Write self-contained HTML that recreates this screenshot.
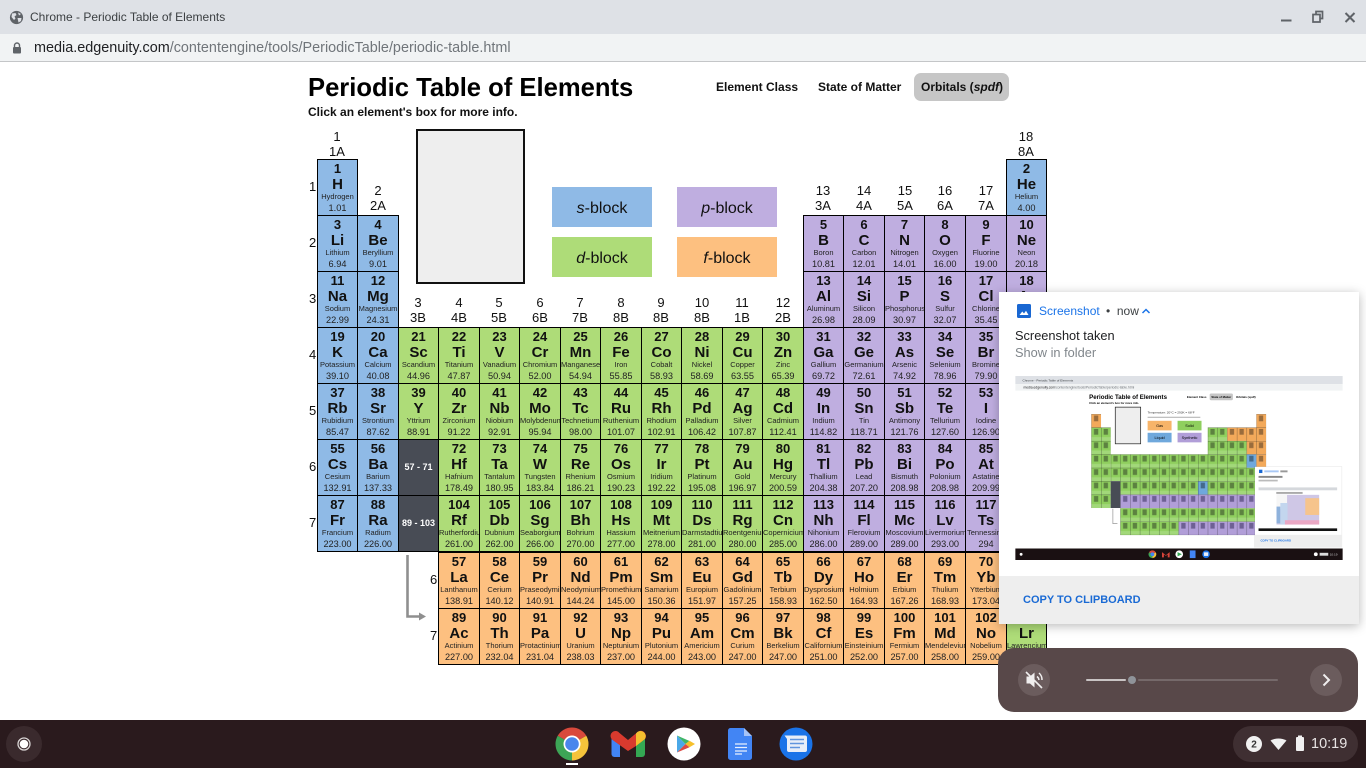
<!DOCTYPE html>
<html><head><meta charset="utf-8"><title>Periodic Table of Elements</title>
<style>
html,body{margin:0;padding:0;width:1366px;height:768px;overflow:hidden;background:#fff;font-family:"Liberation Sans",sans-serif;color:#000}
.a{position:absolute}
.c{position:absolute;box-sizing:border-box;height:57px;border:1px solid #000;padding-top:2px;text-align:center;overflow:hidden;white-space:nowrap;color:#111}
.c b,.c i,.c u,.c s{display:block;text-decoration:none;font-style:normal}
.c b{font-size:13px;line-height:14px;font-weight:700}
.c i{font-size:15px;line-height:16px;font-weight:700;margin-top:1px}
.c u{font-size:7.5px;line-height:9px;color:#222;margin-top:-1px}
.c s{font-size:9.2px;line-height:12px;margin-top:1px;color:#222}
.S{background:#8fbae6}.P{background:#bfaee0}.D{background:#aedc78}.F{background:#fdc080}
.k{background:#484c55;color:#fff;font-weight:700;font-size:9px;line-height:55px;padding:0}
.x1{left:317px;width:41px}.x2{left:357px;width:42px}.x3{left:398px;width:41px}.x4{left:438px;width:42px}.x5{left:479px;width:41px}.x6{left:519px;width:42px}.x7{left:560px;width:41px}.x8{left:600px;width:42px}.x9{left:641px;width:41px}.x10{left:681px;width:42px}.x11{left:722px;width:41px}.x12{left:762px;width:42px}.x13{left:803px;width:41px}.x14{left:843px;width:42px}.x15{left:884px;width:41px}.x16{left:924px;width:42px}.x17{left:965px;width:42px}.x18{left:1006px;width:41px}
.y1{top:159px}.y2{top:215px}.y3{top:271px}.y4{top:327px}.y5{top:383px}.y6{top:439px}.y7{top:495px}.y8{top:552px}.y9{top:608px}
.g{position:absolute;width:40px;text-align:center;font-size:13px;line-height:15px;color:#111}
.n{position:absolute;font-size:13px;line-height:15px;color:#111}
.l{position:absolute;width:100px;height:40px;line-height:43px;text-align:center;font-size:16px;color:#111}
.l em{font-style:italic}
.m{position:absolute;top:80px;font-size:12px;font-weight:700;line-height:15px;color:#111;white-space:nowrap}
</style></head><body>

<div class="a" style="left:0;top:0;width:1366px;height:34px;background:#dee1e6"></div>
<div class="a" style="left:0;top:34px;width:1366px;height:27px;background:#f1f3f4"></div>
<div class="a" style="left:0;top:61px;width:1366px;height:1px;background:#c4c6c8"></div>
<svg class="a" style="left:9px;top:10px" width="15" height="15" viewBox="0 0 15 15"><circle cx="7.5" cy="7.5" r="6.6" fill="#5f6368"/><path d="M3 3.5 L6.5 3 L7.5 5 L5.5 6.5 L6.5 8.5 L5 10 L2.500 7 Z M9 2.5 L12 4 L10 5.500 Z M8.500 8 L12.500 8 L12 11 L9.500 12.500 Z" fill="#dee1e6"/></svg>
<div class="a" style="left:30px;top:10px;font-size:12px;line-height:15px;color:#3c4043;white-space:nowrap">Chrome - Periodic Table of Elements</div>
<svg class="a" style="left:11px;top:41px" width="12" height="14" viewBox="0 0 12 14"><path d="M3.5 6V4.5a2.5 2.5 0 0 1 5 0V6" fill="none" stroke="#5f6368" stroke-width="1.4"/><rect x="2" y="6" width="8" height="6.5" rx="1" fill="#5f6368"/></svg>
<div class="a" style="left:34px;top:40px;font-size:14.4px;line-height:17px;color:#70757a;white-space:nowrap"><span style="color:#202124">media.edgenuity.com</span>/contentengine/tools/PeriodicTable/periodic-table.html</div>
<svg class="a" style="left:1276px;top:8px" width="86" height="20" viewBox="0 0 86 20" fill="none" stroke="#5f6368" stroke-width="2"><path d="M5 12.5H15.500"/><path d="M37 6.500V14H44V6.500ZM40 6V3.500H46.500V10.500H44.500" stroke-width="1.7"/><path d="M69.500 5L78.500 14M78.500 5L69.500 14"/></svg>

<div class="a" style="left:308px;top:72px;font-size:25.6px;line-height:33px;font-weight:700;white-space:nowrap">Periodic Table of Elements</div>
<div class="a" style="left:308px;top:105px;font-size:12px;line-height:14px;font-weight:700;white-space:nowrap;color:#111">Click an element's box for more info.</div>
<div class="m" style="left:716px">Element Class</div>
<div class="m" style="left:818px">State of Matter</div>
<div class="a" style="left:914px;top:73px;width:95px;height:28px;border-radius:7px;background:#c6c6c6"></div>
<div class="m" style="left:921px">Orbitals (<em>spdf</em>)</div>

<div class="a" style="left:416px;top:129px;width:105px;height:151px;border:2px solid #111;background:#eee"></div>
<div class="l S" style="left:552px;top:187px"><em>s</em>-block</div>
<div class="l P" style="left:677px;top:187px"><em>p</em>-block</div>
<div class="l D" style="left:552px;top:237px"><em>d</em>-block</div>
<div class="l F" style="left:677px;top:237px"><em>f</em>-block</div>

<div class="g" style="left:317px;top:129px">1<br>1A</div>
<div class="g" style="left:358px;top:183px">2<br>2A</div>
<div class="g" style="left:398px;top:295px">3<br>3B</div>
<div class="g" style="left:439px;top:295px">4<br>4B</div>
<div class="g" style="left:479px;top:295px">5<br>5B</div>
<div class="g" style="left:520px;top:295px">6<br>6B</div>
<div class="g" style="left:560px;top:295px">7<br>7B</div>
<div class="g" style="left:601px;top:295px">8<br>8B</div>
<div class="g" style="left:641px;top:295px">9<br>8B</div>
<div class="g" style="left:682px;top:295px">10<br>8B</div>
<div class="g" style="left:722px;top:295px">11<br>1B</div>
<div class="g" style="left:763px;top:295px">12<br>2B</div>
<div class="g" style="left:803px;top:183px">13<br>3A</div>
<div class="g" style="left:844px;top:183px">14<br>4A</div>
<div class="g" style="left:885px;top:183px">15<br>5A</div>
<div class="g" style="left:925px;top:183px">16<br>6A</div>
<div class="g" style="left:966px;top:183px">17<br>7A</div>
<div class="g" style="left:1006px;top:129px">18<br>8A</div>
<div class="n" style="left:309px;top:179px">1</div>
<div class="n" style="left:309px;top:235px">2</div>
<div class="n" style="left:309px;top:291px">3</div>
<div class="n" style="left:309px;top:347px">4</div>
<div class="n" style="left:309px;top:403px">5</div>
<div class="n" style="left:309px;top:459px">6</div>
<div class="n" style="left:309px;top:515px">7</div>
<div class="n" style="left:430px;top:572px">6</div>
<div class="n" style="left:430px;top:628px">7</div>

<div class="c S x1 y1"><b>1</b><i>H</i><u>Hydrogen</u><s>1.01</s></div>
<div class="c S x18 y1"><b>2</b><i>He</i><u>Helium</u><s>4.00</s></div>
<div class="c S x1 y2"><b>3</b><i>Li</i><u>Lithium</u><s>6.94</s></div>
<div class="c S x2 y2"><b>4</b><i>Be</i><u>Beryllium</u><s>9.01</s></div>
<div class="c P x13 y2"><b>5</b><i>B</i><u>Boron</u><s>10.81</s></div>
<div class="c P x14 y2"><b>6</b><i>C</i><u>Carbon</u><s>12.01</s></div>
<div class="c P x15 y2"><b>7</b><i>N</i><u>Nitrogen</u><s>14.01</s></div>
<div class="c P x16 y2"><b>8</b><i>O</i><u>Oxygen</u><s>16.00</s></div>
<div class="c P x17 y2"><b>9</b><i>F</i><u>Fluorine</u><s>19.00</s></div>
<div class="c P x18 y2"><b>10</b><i>Ne</i><u>Neon</u><s>20.18</s></div>
<div class="c S x1 y3"><b>11</b><i>Na</i><u>Sodium</u><s>22.99</s></div>
<div class="c S x2 y3"><b>12</b><i>Mg</i><u>Magnesium</u><s>24.31</s></div>
<div class="c P x13 y3"><b>13</b><i>Al</i><u>Aluminum</u><s>26.98</s></div>
<div class="c P x14 y3"><b>14</b><i>Si</i><u>Silicon</u><s>28.09</s></div>
<div class="c P x15 y3"><b>15</b><i>P</i><u>Phosphorus</u><s>30.97</s></div>
<div class="c P x16 y3"><b>16</b><i>S</i><u>Sulfur</u><s>32.07</s></div>
<div class="c P x17 y3"><b>17</b><i>Cl</i><u>Chlorine</u><s>35.45</s></div>
<div class="c P x18 y3"><b>18</b><i>Ar</i><u>Argon</u><s>39.95</s></div>
<div class="c S x1 y4"><b>19</b><i>K</i><u>Potassium</u><s>39.10</s></div>
<div class="c S x2 y4"><b>20</b><i>Ca</i><u>Calcium</u><s>40.08</s></div>
<div class="c D x3 y4"><b>21</b><i>Sc</i><u>Scandium</u><s>44.96</s></div>
<div class="c D x4 y4"><b>22</b><i>Ti</i><u>Titanium</u><s>47.87</s></div>
<div class="c D x5 y4"><b>23</b><i>V</i><u>Vanadium</u><s>50.94</s></div>
<div class="c D x6 y4"><b>24</b><i>Cr</i><u>Chromium</u><s>52.00</s></div>
<div class="c D x7 y4"><b>25</b><i>Mn</i><u>Manganese</u><s>54.94</s></div>
<div class="c D x8 y4"><b>26</b><i>Fe</i><u>Iron</u><s>55.85</s></div>
<div class="c D x9 y4"><b>27</b><i>Co</i><u>Cobalt</u><s>58.93</s></div>
<div class="c D x10 y4"><b>28</b><i>Ni</i><u>Nickel</u><s>58.69</s></div>
<div class="c D x11 y4"><b>29</b><i>Cu</i><u>Copper</u><s>63.55</s></div>
<div class="c D x12 y4"><b>30</b><i>Zn</i><u>Zinc</u><s>65.39</s></div>
<div class="c P x13 y4"><b>31</b><i>Ga</i><u>Gallium</u><s>69.72</s></div>
<div class="c P x14 y4"><b>32</b><i>Ge</i><u>Germanium</u><s>72.61</s></div>
<div class="c P x15 y4"><b>33</b><i>As</i><u>Arsenic</u><s>74.92</s></div>
<div class="c P x16 y4"><b>34</b><i>Se</i><u>Selenium</u><s>78.96</s></div>
<div class="c P x17 y4"><b>35</b><i>Br</i><u>Bromine</u><s>79.90</s></div>
<div class="c P x18 y4"><b>36</b><i>Kr</i><u>Krypton</u><s>83.80</s></div>
<div class="c S x1 y5"><b>37</b><i>Rb</i><u>Rubidium</u><s>85.47</s></div>
<div class="c S x2 y5"><b>38</b><i>Sr</i><u>Strontium</u><s>87.62</s></div>
<div class="c D x3 y5"><b>39</b><i>Y</i><u>Yttrium</u><s>88.91</s></div>
<div class="c D x4 y5"><b>40</b><i>Zr</i><u>Zirconium</u><s>91.22</s></div>
<div class="c D x5 y5"><b>41</b><i>Nb</i><u>Niobium</u><s>92.91</s></div>
<div class="c D x6 y5"><b>42</b><i>Mo</i><u>Molybdenum</u><s>95.94</s></div>
<div class="c D x7 y5"><b>43</b><i>Tc</i><u>Technetium</u><s>98.00</s></div>
<div class="c D x8 y5"><b>44</b><i>Ru</i><u>Ruthenium</u><s>101.07</s></div>
<div class="c D x9 y5"><b>45</b><i>Rh</i><u>Rhodium</u><s>102.91</s></div>
<div class="c D x10 y5"><b>46</b><i>Pd</i><u>Palladium</u><s>106.42</s></div>
<div class="c D x11 y5"><b>47</b><i>Ag</i><u>Silver</u><s>107.87</s></div>
<div class="c D x12 y5"><b>48</b><i>Cd</i><u>Cadmium</u><s>112.41</s></div>
<div class="c P x13 y5"><b>49</b><i>In</i><u>Indium</u><s>114.82</s></div>
<div class="c P x14 y5"><b>50</b><i>Sn</i><u>Tin</u><s>118.71</s></div>
<div class="c P x15 y5"><b>51</b><i>Sb</i><u>Antimony</u><s>121.76</s></div>
<div class="c P x16 y5"><b>52</b><i>Te</i><u>Tellurium</u><s>127.60</s></div>
<div class="c P x17 y5"><b>53</b><i>I</i><u>Iodine</u><s>126.90</s></div>
<div class="c P x18 y5"><b>54</b><i>Xe</i><u>Xenon</u><s>131.29</s></div>
<div class="c S x1 y6"><b>55</b><i>Cs</i><u>Cesium</u><s>132.91</s></div>
<div class="c S x2 y6"><b>56</b><i>Ba</i><u>Barium</u><s>137.33</s></div>
<div class="c k x3 y6">57 - 71</div>
<div class="c D x4 y6"><b>72</b><i>Hf</i><u>Hafnium</u><s>178.49</s></div>
<div class="c D x5 y6"><b>73</b><i>Ta</i><u>Tantalum</u><s>180.95</s></div>
<div class="c D x6 y6"><b>74</b><i>W</i><u>Tungsten</u><s>183.84</s></div>
<div class="c D x7 y6"><b>75</b><i>Re</i><u>Rhenium</u><s>186.21</s></div>
<div class="c D x8 y6"><b>76</b><i>Os</i><u>Osmium</u><s>190.23</s></div>
<div class="c D x9 y6"><b>77</b><i>Ir</i><u>Iridium</u><s>192.22</s></div>
<div class="c D x10 y6"><b>78</b><i>Pt</i><u>Platinum</u><s>195.08</s></div>
<div class="c D x11 y6"><b>79</b><i>Au</i><u>Gold</u><s>196.97</s></div>
<div class="c D x12 y6"><b>80</b><i>Hg</i><u>Mercury</u><s>200.59</s></div>
<div class="c P x13 y6"><b>81</b><i>Tl</i><u>Thallium</u><s>204.38</s></div>
<div class="c P x14 y6"><b>82</b><i>Pb</i><u>Lead</u><s>207.20</s></div>
<div class="c P x15 y6"><b>83</b><i>Bi</i><u>Bismuth</u><s>208.98</s></div>
<div class="c P x16 y6"><b>84</b><i>Po</i><u>Polonium</u><s>208.98</s></div>
<div class="c P x17 y6"><b>85</b><i>At</i><u>Astatine</u><s>209.99</s></div>
<div class="c P x18 y6"><b>86</b><i>Rn</i><u>Radon</u><s>222.02</s></div>
<div class="c S x1 y7"><b>87</b><i>Fr</i><u>Francium</u><s>223.00</s></div>
<div class="c S x2 y7"><b>88</b><i>Ra</i><u>Radium</u><s>226.00</s></div>
<div class="c k x3 y7">89 - 103</div>
<div class="c D x4 y7"><b>104</b><i>Rf</i><u>Rutherfordium</u><s>261.00</s></div>
<div class="c D x5 y7"><b>105</b><i>Db</i><u>Dubnium</u><s>262.00</s></div>
<div class="c D x6 y7"><b>106</b><i>Sg</i><u>Seaborgium</u><s>266.00</s></div>
<div class="c D x7 y7"><b>107</b><i>Bh</i><u>Bohrium</u><s>270.00</s></div>
<div class="c D x8 y7"><b>108</b><i>Hs</i><u>Hassium</u><s>277.00</s></div>
<div class="c D x9 y7"><b>109</b><i>Mt</i><u>Meitnerium</u><s>278.00</s></div>
<div class="c D x10 y7"><b>110</b><i>Ds</i><u>Darmstadtium</u><s>281.00</s></div>
<div class="c D x11 y7"><b>111</b><i>Rg</i><u>Roentgenium</u><s>280.00</s></div>
<div class="c D x12 y7"><b>112</b><i>Cn</i><u>Copernicium</u><s>285.00</s></div>
<div class="c P x13 y7"><b>113</b><i>Nh</i><u>Nihonium</u><s>286.00</s></div>
<div class="c P x14 y7"><b>114</b><i>Fl</i><u>Flerovium</u><s>289.00</s></div>
<div class="c P x15 y7"><b>115</b><i>Mc</i><u>Moscovium</u><s>289.00</s></div>
<div class="c P x16 y7"><b>116</b><i>Lv</i><u>Livermorium</u><s>293.00</s></div>
<div class="c P x17 y7"><b>117</b><i>Ts</i><u>Tennessine</u><s>294</s></div>
<div class="c P x18 y7"><b>118</b><i>Og</i><u>Oganesson</u><s>294</s></div>
<div class="c F x4 y8"><b>57</b><i>La</i><u>Lanthanum</u><s>138.91</s></div>
<div class="c F x5 y8"><b>58</b><i>Ce</i><u>Cerium</u><s>140.12</s></div>
<div class="c F x6 y8"><b>59</b><i>Pr</i><u>Praseodymium</u><s>140.91</s></div>
<div class="c F x7 y8"><b>60</b><i>Nd</i><u>Neodymium</u><s>144.24</s></div>
<div class="c F x8 y8"><b>61</b><i>Pm</i><u>Promethium</u><s>145.00</s></div>
<div class="c F x9 y8"><b>62</b><i>Sm</i><u>Samarium</u><s>150.36</s></div>
<div class="c F x10 y8"><b>63</b><i>Eu</i><u>Europium</u><s>151.97</s></div>
<div class="c F x11 y8"><b>64</b><i>Gd</i><u>Gadolinium</u><s>157.25</s></div>
<div class="c F x12 y8"><b>65</b><i>Tb</i><u>Terbium</u><s>158.93</s></div>
<div class="c F x13 y8"><b>66</b><i>Dy</i><u>Dysprosium</u><s>162.50</s></div>
<div class="c F x14 y8"><b>67</b><i>Ho</i><u>Holmium</u><s>164.93</s></div>
<div class="c F x15 y8"><b>68</b><i>Er</i><u>Erbium</u><s>167.26</s></div>
<div class="c F x16 y8"><b>69</b><i>Tm</i><u>Thulium</u><s>168.93</s></div>
<div class="c F x17 y8"><b>70</b><i>Yb</i><u>Ytterbium</u><s>173.04</s></div>
<div class="c D x18 y8"><b>71</b><i>Lu</i><u>Lutetium</u><s>174.97</s></div>
<div class="c F x4 y9"><b>89</b><i>Ac</i><u>Actinium</u><s>227.00</s></div>
<div class="c F x5 y9"><b>90</b><i>Th</i><u>Thorium</u><s>232.04</s></div>
<div class="c F x6 y9"><b>91</b><i>Pa</i><u>Protactinium</u><s>231.04</s></div>
<div class="c F x7 y9"><b>92</b><i>U</i><u>Uranium</u><s>238.03</s></div>
<div class="c F x8 y9"><b>93</b><i>Np</i><u>Neptunium</u><s>237.00</s></div>
<div class="c F x9 y9"><b>94</b><i>Pu</i><u>Plutonium</u><s>244.00</s></div>
<div class="c F x10 y9"><b>95</b><i>Am</i><u>Americium</u><s>243.00</s></div>
<div class="c F x11 y9"><b>96</b><i>Cm</i><u>Curium</u><s>247.00</s></div>
<div class="c F x12 y9"><b>97</b><i>Bk</i><u>Berkelium</u><s>247.00</s></div>
<div class="c F x13 y9"><b>98</b><i>Cf</i><u>Californium</u><s>251.00</s></div>
<div class="c F x14 y9"><b>99</b><i>Es</i><u>Einsteinium</u><s>252.00</s></div>
<div class="c F x15 y9"><b>100</b><i>Fm</i><u>Fermium</u><s>257.00</s></div>
<div class="c F x16 y9"><b>101</b><i>Md</i><u>Mendelevium</u><s>258.00</s></div>
<div class="c F x17 y9"><b>102</b><i>No</i><u>Nobelium</u><s>259.00</s></div>
<div class="c D x18 y9"><b>103</b><i>Lr</i><u>Lawrencium</u><s>262.00</s></div>

<svg class="a" style="left:400px;top:550px" width="30" height="75" viewBox="0 0 30 75" fill="none"><path d="M7.5 5V66.5H20" stroke="#8f8f8f" stroke-width="2.600"/><path d="M19 62.500L26 66.500L19 70.500Z" fill="#8f8f8f"/></svg>

<div class="a" style="left:999px;top:292px;width:360px;height:332px;background:#fff;box-shadow:0 2px 10px rgba(0,0,0,.28)"></div>
<div class="a" style="left:999px;top:576px;width:360px;height:48px;background:#eee"></div>
<svg class="a" style="left:1017px;top:304px" width="14" height="14" viewBox="0 0 14 14"><rect width="14" height="14" rx="1.5" fill="#1967d2"/><path d="M2.5 11L5.3 7.5L7 9.5L9 6.8L11.5 11Z" fill="#fff"/></svg>
<div class="a" style="left:1039px;top:304px;font-size:12px;line-height:14px;color:#1a73e8;white-space:nowrap">Screenshot</div>
<div class="a" style="left:1106px;top:304px;font-size:12px;line-height:14px;color:#3c4043;white-space:nowrap">• &nbsp;now</div>
<svg class="a" style="left:1141px;top:307px" width="10" height="8" viewBox="0 0 10 8"><path d="M1.5 6L5 2.5L8.5 6" fill="none" stroke="#1a73e8" stroke-width="1.5"/></svg>
<div class="a" style="left:1015px;top:328px;font-size:12.8px;line-height:15px;color:#202124;white-space:nowrap">Screenshot taken</div>
<div class="a" style="left:1015px;top:345px;font-size:12.8px;line-height:15px;color:#80868b;white-space:nowrap">Show in folder</div>
<div class="a" style="left:1023px;top:593px;font-size:11px;line-height:14px;font-weight:700;color:#1a6ad4;white-space:nowrap">COPY TO CLIPBOARD</div>

<svg class="a" style="left:1015px;top:376px" width="328" height="184" viewBox="0 0 1366 768" font-family="Liberation Sans, sans-serif">
<defs>
<pattern id="pg" patternUnits="userSpaceOnUse" x="317" y="159" width="40.5" height="56"><rect width="40.5" height="56" fill="#8fcf5e"/><rect y="40" width="40.5" height="16" fill="#a2d87a"/><path d="M0 0V56M0 0H40.5" stroke="#222" stroke-width="2"/><rect x="11" y="6" width="18" height="24" fill="#5c8240"/></pattern>
<pattern id="po" patternUnits="userSpaceOnUse" x="317" y="159" width="40.5" height="56"><rect width="40.5" height="56" fill="#f3a95a"/><path d="M0 0V56M0 0H40.5" stroke="#222" stroke-width="2"/><rect x="11" y="6" width="18" height="24" fill="#9a6c3c"/></pattern>
<pattern id="pp" patternUnits="userSpaceOnUse" x="317" y="159" width="40.5" height="56"><rect width="40.5" height="56" fill="#b19ed8"/><path d="M0 0V56M0 0H40.5" stroke="#222" stroke-width="2"/><rect x="11" y="6" width="18" height="24" fill="#6e6094"/></pattern>
<pattern id="pb" patternUnits="userSpaceOnUse" x="317" y="159" width="40.5" height="56"><rect width="40.5" height="56" fill="#6fa8dc"/><path d="M0 0V56M0 0H40.5" stroke="#222" stroke-width="2"/><rect x="11" y="6" width="18" height="24" fill="#446a8c"/></pattern>
</defs>
<rect width="1366" height="768" fill="#fff"/>
<rect width="1366" height="34" fill="#dee1e6"/><rect y="34" width="1366" height="27" fill="#f1f3f4"/>
<text x="30" y="22" font-size="13" fill="#3c4043">Chrome - Periodic Table of Elements</text>
<text x="34" y="53" font-size="14" fill="#70757a"><tspan fill="#202124">media.edgenuity.com</tspan>/contentengine/tools/PeriodicTable/periodic-table.html</text>
<text x="308" y="97" font-size="25.6" font-weight="700">Periodic Table of Elements</text>
<text x="308" y="116" font-size="12" font-weight="700">Click an element's box for more info.</text>
<text x="716" y="92" font-size="12" font-weight="700">Element Class</text>
<rect x="811" y="73" width="97" height="28" rx="6" fill="#c6c6c6"/>
<text x="818" y="92" font-size="12" font-weight="700">State of Matter</text>
<text x="921" y="92" font-size="12" font-weight="700">Orbitals (spdf)</text>
<rect x="417" y="130" width="106" height="153" fill="#eee" stroke="#222" stroke-width="3"/>
<text x="552" y="157" font-size="13" fill="#333">Temperature: 20°C = 293K = 68°F</text>
<rect x="552" y="170" width="220" height="5" fill="#bbb"/>
<rect x="552" y="187" width="100" height="40" fill="#f7b469"/><text x="602" y="212" font-size="16" text-anchor="middle">Gas</text>
<rect x="677" y="187" width="100" height="40" fill="#8fcf5e"/><text x="727" y="212" font-size="16" text-anchor="middle">Solid</text>
<rect x="552" y="237" width="100" height="40" fill="#6fa8dc"/><text x="602" y="262" font-size="16" text-anchor="middle">Liquid</text>
<rect x="677" y="237" width="100" height="40" fill="#b19ed8"/><text x="727" y="262" font-size="16" text-anchor="middle">Synthetic</text>
<rect x="317" y="159" width="40.5" height="56" fill="url(#po)"/><rect x="1006" y="159" width="40.5" height="56" fill="url(#po)"/>
<rect x="317" y="215" width="81" height="336" fill="url(#pg)"/>
<rect x="803" y="215" width="81" height="56" fill="url(#pg)"/><rect x="884" y="215" width="162.5" height="56" fill="url(#po)"/>
<rect x="803" y="271" width="162" height="56" fill="url(#pg)"/><rect x="965" y="271" width="81.5" height="56" fill="url(#po)"/>
<rect x="398" y="327" width="567" height="112" fill="url(#pg)"/><rect x="965" y="327" width="40.5" height="56" fill="url(#pb)"/><rect x="1006" y="327" width="40.5" height="56" fill="url(#po)"/><rect x="965" y="383" width="81.5" height="56" fill="url(#pg)"/>
<rect x="398" y="439" width="40.5" height="112" fill="#484c55"/>
<rect x="438" y="439" width="608" height="56" fill="url(#pg)"/><rect x="762" y="439" width="40.5" height="56" fill="url(#pb)"/>
<rect x="438" y="495" width="608" height="56" fill="url(#pp)"/>
<rect x="438" y="552" width="608" height="56" fill="url(#pg)"/>
<rect x="438" y="608" width="243" height="56" fill="url(#pg)"/><rect x="681" y="608" width="365" height="56" fill="url(#pp)"/>
<path d="M407 554V616H426" fill="none" stroke="#999" stroke-width="3"/>
<rect x="996" y="376" width="368" height="340" fill="#000" opacity=".07"/>
<rect x="1000" y="379" width="361" height="333" fill="#fff"/>
<rect x="1000" y="663" width="361" height="49" fill="#eee"/>
<rect x="1017" y="391" width="14" height="14" fill="#1967d2"/>
<rect x="1039" y="394" width="60" height="8" fill="#a9c8f5"/><rect x="1106" y="394" width="30" height="8" fill="#999"/>
<rect x="1015" y="417" width="100" height="8" fill="#888"/><rect x="1015" y="433" width="80" height="7" fill="#bbb"/>
<rect x="1015" y="465" width="328" height="12" fill="#d5d8dc"/>
<rect x="1089" y="484" width="110" height="8" fill="#aaa"/>
<rect x="1090" y="496" width="178" height="124" fill="#cfc7e6"/>
<rect x="1090" y="496" width="44" height="60" fill="#f6f6f6"/><rect x="1090" y="545" width="16" height="70" fill="#8fb2dc"/><rect x="1106" y="530" width="30" height="90" fill="#c3d6ee"/>
<rect x="1210" y="510" width="58" height="70" fill="#f6c48c"/><rect x="1125" y="602" width="143" height="18" fill="#eaa8c4"/>
<rect x="1015" y="636" width="328" height="11" fill="#111"/>
<text x="1023" y="691" font-size="12" font-weight="700" fill="#1a73e8">COPY TO CLIPBOARD</text>
<rect y="720" width="1366" height="48" fill="#1a1012"/>
<path d="M572 744L558 736A16 16 0 0 1 586 736Z" fill="#d9493c"/><path d="M572 744L586 736A16 16 0 0 1 572 760Z" fill="#f5c33b"/><path d="M572 744L572 760A16 16 0 0 1 558 736Z" fill="#3da556"/><circle cx="572" cy="744" r="8" fill="#4285f4"/>
<path d="M612 757V735L628 748L644 735V757H636V745L628 751L620 745V757Z" fill="#d9443a"/>
<circle cx="684" cy="744" r="16" fill="#fff"/><path d="M677 735V753L695 744Z" fill="#34a853"/>
<rect x="728" y="728" width="24" height="32" fill="#4285f4"/>
<circle cx="796" cy="744" r="16" fill="#1a73e8"/><rect x="787" y="736" width="18" height="15" fill="#e8eef8"/>
<circle cx="24" cy="744" r="6" fill="#fff"/>
<circle cx="1254" cy="744" r="8" fill="#fff"/><rect x="1270" y="738" width="36" height="12" fill="#ddd"/>
<text x="1312" y="749" font-size="13" fill="#ccc">10:19</text>
</svg>

<div class="a" style="left:998px;top:648px;width:360px;height:64px;border-radius:16px;background:#584849"></div>
<svg class="a" style="left:998px;top:648px" width="360" height="64" viewBox="0 0 360 64">
<circle cx="36" cy="32" r="16" fill="#6b5c5d"/>
<path d="M28.5 28.5H32L36.5 24.5V39.500L32 35.500H28.500Z" fill="#f0eeee"/>
<path d="M39 28.500A5 5 0 0 1 41 32M41 25A9 9 0 0 1 44 32" fill="none" stroke="#f0eeee" stroke-width="1.500"/>
<path d="M28 24L44 40" stroke="#f0eeee" stroke-width="1.600"/>
<rect x="88" y="31" width="40" height="2" rx="1" fill="#c9c4c4"/>
<circle cx="134" cy="32" r="4" fill="#8f9399"/>
<rect x="140" y="31" width="140" height="2" rx="1" fill="#75696a"/>
<circle cx="328" cy="32" r="16" fill="#6b5c5d"/>
<path d="M325.500 26.500L331 32L325.500 37.500" fill="none" stroke="#f0eeee" stroke-width="2"/>
</svg>

<div class="a" style="left:0;top:720px;width:1366px;height:48px;background:#2a1a1d"></div>
<div class="a" style="left:6px;top:726px;width:36px;height:36px;border-radius:50%;background:#3a2a2d"></div>
<svg class="a" style="left:14px;top:734px" width="20" height="20" viewBox="0 0 20 20"><circle cx="10" cy="10" r="6" fill="none" stroke="#d9d5d5" stroke-width="1.300"/><circle cx="10" cy="10" r="4.300" fill="#fff"/></svg>

<svg class="a" style="left:550px;top:724px" width="270" height="44" viewBox="550 724 270 44">
<path d="M572 744L557.700 735.750A16.500 16.500 0 0 1 586.300 735.750Z" fill="#d9493c"/>
<path d="M572 744L586.300 735.750A16.500 16.500 0 0 1 572 760.500Z" fill="#f5c33b"/>
<path d="M572 744L572 760.500A16.500 16.500 0 0 1 557.700 735.750Z" fill="#3da556"/>
<circle cx="572" cy="744" r="8.500" fill="#fff"/><circle cx="572" cy="744" r="6.800" fill="#4a86ec"/>
<rect x="566" y="763" width="12" height="2" fill="#fff"/>
<path d="M611.500 739V754A3 3 0 0 0 614.500 757H620V745Z" fill="#4285f4"/>
<path d="M636 745V757H642A3 3 0 0 0 645 754V739Z" fill="#34a853"/>
<path d="M611.500 739A5 5 0 0 1 619.500 733L628 740L628 751L614 741Z" fill="#d93a2e"/>
<path d="M628 740L636.500 733A5 5 0 0 1 645 739L636 746L628 751Z" fill="#d93a2e"/>
<path d="M636 733.500A5 5 0 0 1 645 739L636 746Z" fill="#f4bf2f"/>
<circle cx="684" cy="744" r="16.500" fill="#fff"/>
<path d="M677 735.500V752.500L685.500 744Z" fill="#4aa8e8"/>
<path d="M677 735.500L689.500 741L685.500 744Z" fill="#3fb568"/>
<path d="M689.500 740.800L695 744L689.500 747.200L685.500 744Z" fill="#f6c02c"/>
<path d="M677 752.500L689.500 747.200L685.500 744Z" fill="#dc4a44"/>
<path d="M730.500 728H744L752 736V757.500A2.500 2.500 0 0 1 749.500 760H730.500A2.500 2.500 0 0 1 728 757.500V730.500A2.500 2.500 0 0 1 730.500 728Z" fill="#4285f4"/>
<path d="M744 728L752 736H744Z" fill="#a6c3f7"/>
<path d="M735 744H747M735 747.500H747M735 751H747M735 754H742" stroke="#e8f0fe" stroke-width="1.300"/>
<circle cx="796" cy="744" r="16.500" fill="#1a73e8"/>
<path d="M787 735.500H805A2 2 0 0 1 807 737.500V750A2 2 0 0 1 805 752H789A2 2 0 0 1 787 750V739L784.500 735.500Z" fill="#e8eef8"/>
<path d="M790 739.500H804M790 743.500H804M790 747.500H800" stroke="#5f94dd" stroke-width="1.500"/>
</svg>

<div class="a" style="left:1233px;top:726px;width:125px;height:36px;border-radius:18px;background:#3f2f32"></div>
<svg class="a" style="left:1240px;top:730px" width="70" height="28" viewBox="0 0 70 28">
<circle cx="14" cy="14" r="8" fill="#f1f1f1"/>
<path d="M30.500 10.500A17 17 0 0 1 46.500 10.500L38.500 20Z" fill="#f1f1f1"/>
<rect x="56" y="7" width="8" height="14" rx="1" fill="#f1f1f1"/><rect x="58" y="5.500" width="4" height="2" fill="#f1f1f1"/>
<text x="14" y="17.500" font-size="10" font-weight="700" text-anchor="middle" fill="#333" font-family="Liberation Sans, sans-serif">2</text>
</svg>
<div class="a" style="left:1311px;top:736px;font-size:14.500px;line-height:16px;color:#e8e4e4;white-space:nowrap">10:19</div>
</body></html>
